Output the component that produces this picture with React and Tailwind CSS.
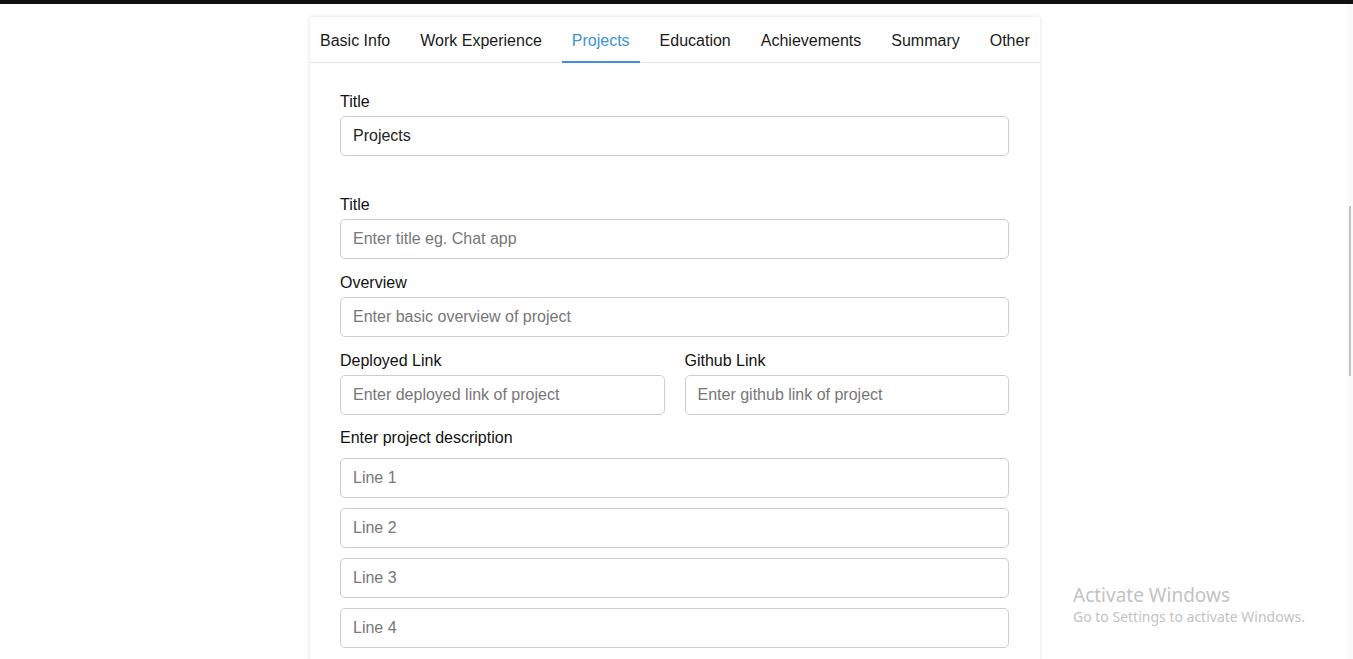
import React from "react";

const tabs = ["Basic Info", "Work Experience", "Projects", "Education", "Achievements", "Summary", "Other"];

function Field({ label, placeholder, value, className = "" }) {
  return (
    <div className={className}>
      <div className="leading-[19px] text-[16px] text-[#111] mb-[5px]">{label}</div>
      <Input placeholder={placeholder} value={value} />
    </div>
  );
}

function Input({ placeholder, value }) {
  return (
    <input
      readOnly
      defaultValue={value}
      placeholder={placeholder}
      className="block w-full h-[40px] rounded-[5px] border border-[#cdcdcd] bg-white px-[12px] text-[16px] text-[#222] placeholder:text-[#777] outline-none"
      style={{ fontFamily: '"Liberation Sans", Arial, sans-serif' }}
    />
  );
}

export default function App() {
  return (
    <div
      className="relative min-h-screen bg-white overflow-hidden"
      style={{ fontFamily: '"Liberation Sans", Arial, sans-serif' }}
    >
      <div className="h-[4px] w-full bg-[#111]" />
      <div className="ml-[310px] mt-[13px] w-[730px] bg-white shadow-[0_0_4px_rgba(0,0,0,0.14)]">
        <div className="flex gap-[10px] border-b border-[#e6e6e6]">
          {tabs.map((t) => {
            const active = t === "Projects";
            return (
              <div
                key={t}
                className={
                  "relative h-[45px] px-[10px] pt-[2px] flex items-center text-[16px] " +
                  (active ? "text-[#3d92d8]" : "text-[#1a1a1a]")
                }
              >
                {t}
                {active && <div className="absolute left-0 right-0 bottom-[-1px] h-[2px] bg-[#3d92d8]" />}
              </div>
            );
          })}
        </div>
        <div className="pl-[30px] pr-[31px] pt-[29px] pb-[40px] w-full">
          <Field label="Title" value="Projects" />
          <Field className="mt-[39px]" label="Title" placeholder="Enter title eg. Chat app" />
          <Field className="mt-[14px]" label="Overview" placeholder="Enter basic overview of project" />
          <div className="mt-[14px] grid grid-cols-2 gap-[20px]">
            <Field label="Deployed Link" placeholder="Enter deployed link of project" />
            <Field label="Github Link" placeholder="Enter github link of project" />
          </div>
          <div className="mt-[13px] leading-[19px] text-[16px] text-[#111] mb-[11px]">Enter project description</div>
          <div className="flex flex-col gap-[10px]">
            <Input placeholder="Line 1" />
            <Input placeholder="Line 2" />
            <Input placeholder="Line 3" />
            <Input placeholder="Line 4" />
          </div>
        </div>
      </div>

      {/* scrollbar */}
      <div className="absolute right-0 top-[4px] bottom-0 w-[6px] bg-[#fafafa]" />
      <div className="absolute right-[2px] top-[206px] h-[170px] w-[2px] bg-[#c4c4c4]" />

      {/* Windows watermark */}
      <div
        className="absolute left-[1073px] top-[583px] text-[#c2c2c2] pointer-events-none"
        style={{ fontFamily: '"Noto Sans", "Open Sans", sans-serif' }}
      >
        <div className="text-[19px] leading-[24px]">Activate Windows</div>
        <div className="text-[14px] leading-[18px] mt-[1px]">Go to Settings to activate Windows.</div>
      </div>
    </div>
  );
}
